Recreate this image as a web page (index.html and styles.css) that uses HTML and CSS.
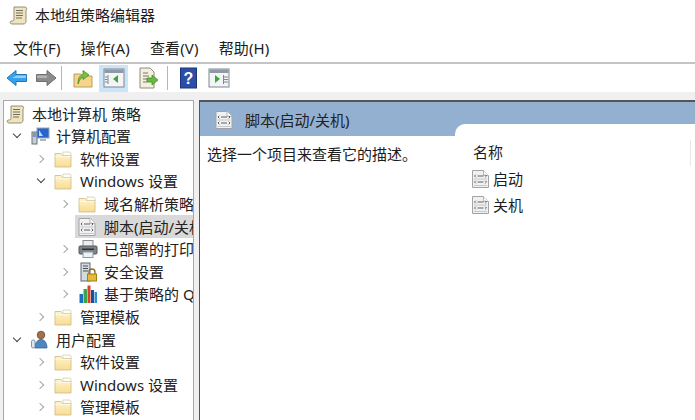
FILE: index.html
```html
<!DOCTYPE html>
<html lang="zh-CN">
<head>
<meta charset="utf-8">
<title>本地组策略编辑器</title>
<link rel="stylesheet" href="styles.css">
</head>
<body>
<svg class="defs" width="0" height="0" aria-hidden="true">
  <defs>
    <linearGradient id="fold" x1="0" y1="0" x2="0" y2="1"><stop offset="0" stop-color="#fff4cc"/><stop offset="1" stop-color="#f8dc92"/></linearGradient>
    <symbol id="folder" viewBox="0 0 18 18">
      <path d="M1 3.500h6l1.500 1.500H17v12H1z" fill="url(#fold)" stroke="#cdb985" stroke-width=".8"/>
      <path d="M9 2h7l1 1.200v2.300H8.600z" fill="#fffdf6" stroke="#cfc5a8" stroke-width=".7"/>
      <path d="M1.400 6.500h15.200" stroke="#fff8dc" stroke-width="1"/>
    </symbol>
    <symbol id="script" viewBox="0 0 17 18">
      <path d="M.5.500h11l5 5v12H.5z" fill="#f1f1f1" stroke="#a3a3a3"/>
      <path d="M11.500.500v5h5" fill="#fff" stroke="#b5b5b5"/>
      <path d="M3.800 4.700 2.500 6l1.300 1.300M13.200 4.700 14.500 6l-1.300 1.300M5.500 6h6M3.800 10.700 2.500 12l1.300 1.300M13.200 10.700l1.300 1.300-1.300 1.300M5.500 12h6" fill="none" stroke="#4b535b" stroke-width=".9"/>
      <path d="M2 9h13M2 15.500h13" stroke="#bdbdbd" stroke-width=".8"/>
    </symbol>
    <symbol id="scroll" viewBox="0 0 20 20">
      <path d="M5 2h11c2 0 2 2.500 1 3v11c0 2-1 3-3 3H3c-2 0-2.500-2.500-1-3 1.500 0 2.500 0 3-1z" fill="#efe4c0" stroke="#8d8468" stroke-width=".9"/>
      <path d="M7 5.500h7M7 8h7M7 10.500h7M7 13h6" stroke="#77705c" stroke-width="1"/>
    </symbol>
  </defs>
</svg>

<header class="titlebar">
  <svg class="ic20"><use href="#scroll"/></svg>
  <span class="title">本地组策略编辑器</span>
</header>

<nav class="menubar">
  <span class="menu">文件(F)</span>
  <span class="menu">操作(A)</span>
  <span class="menu">查看(V)</span>
  <span class="menu">帮助(H)</span>
</nav>

<div class="toolbar">
  <svg class="tool" viewBox="0 0 22 22"><path d="M1 11 10 3.500V7.500h10.500v7H10v4z" fill="#35a1ea" stroke="#2377b8"/><path d="M10.500 8.500h9.500v2.500H6z" fill="#8fd2f8"/></svg>
  <svg class="tool" viewBox="0 0 22 22"><path d="M21 11 12 3.500V7.500H1.500v7H12v4z" fill="#8b8b8b" stroke="#6e6e6e"/><path d="M2 8.500h10v2.500H2z" fill="#b4b4b4"/></svg>
  <i class="sep sep-a"></i>
  <svg class="tool" viewBox="0 0 22 22"><path d="M2 7h7l1.500 2H20v11H2z" fill="#f5d58a" stroke="#b99e5f"/><path d="M6 17c0-5 1-8 5-9.500V3.500L17 8l-6 4.500V10c-2 .8-3.500 3-5 7z" fill="#7cc142" stroke="#4b8c25" stroke-width=".8"/></svg>
  <span class="toolbtn">
    <svg class="tool flush" viewBox="0 0 22 22"><rect x="1" y="2" width="20" height="18" fill="#f2f4f6" stroke="#7d8790"/><rect x="1.500" y="2.500" width="19" height="3.500" fill="#8f99a3"/><path d="M5 8v9M2 10h2.500M2 12.500h2.500M2 15h2.500" stroke="#7d8790"/><path d="M15 8v8l-5-4z" fill="#3fa535"/></svg>
  </span>
  <svg class="tool doc" viewBox="0 0 22 22"><path d="M3 1h10l4 4v16H3z" fill="#f4f0e0" stroke="#8f8a7a"/><path d="M6 6h5M6 9h6M6 12h4M6 15h4" stroke="#7b776a"/><path d="M10 11h5V8l6 5-6 5v-3h-5z" fill="#63bd3c" stroke="#3f8e25" stroke-width=".8"/></svg>
  <i class="sep sep-b"></i>
  <svg class="tool" viewBox="0 0 22 22"><rect x="2.500" y="1" width="16" height="20" fill="#2b4fa8" stroke="#1c3477"/><text x="10.500" y="17" class="qmark">?</text></svg>
  <svg class="tool last" viewBox="0 0 22 22"><rect x="1" y="2" width="20" height="18" fill="#f2f4f6" stroke="#7d8790"/><rect x="1.500" y="2.500" width="19" height="3.500" fill="#8f99a3"/><path d="M15.500 8v9M16 10h4M16 12.500h4M16 15h4" stroke="#7d8790"/><path d="M7 8v8l5-4z" fill="#3fa535"/></svg>
</div>

<main class="workspace">
  <aside class="tree">
    <div class="row l0"><span class="chev"></span><svg class="ic20"><use href="#scroll"/></svg><span>本地计算机 策略</span></div>
    <div class="row l1"><span class="chev open"></span>
      <svg class="ic20" viewBox="0 0 20 20"><rect x="7" y="2" width="12" height="10" fill="#2a63c9" stroke="#9aa7b5"/><path d="M9 4l4 6h-4z" fill="#bcd9f7"/><path d="M10 13h6v2h-6z" fill="#aeb6bd"/><rect x="2" y="6" width="5" height="12" fill="#c5ccd3" stroke="#667480"/><path d="M3 8h3M3 10h3" stroke="#2a63c9"/></svg>
      <span>计算机配置</span></div>
    <div class="row l2"><span class="chev"></span><svg class="ic18"><use href="#folder"/></svg><span>软件设置</span></div>
    <div class="row l2"><span class="chev open"></span><svg class="ic18"><use href="#folder"/></svg><span>Windows 设置</span></div>
    <div class="row l3"><span class="chev"></span><svg class="ic18"><use href="#folder"/></svg><span>域名解析策略</span></div>
    <div class="row l3 selected"><span class="chev none"></span><svg class="ic18"><use href="#script"/></svg><span>脚本(启动/关机)</span></div>
    <div class="row l3"><span class="chev"></span>
      <svg class="ic20" viewBox="0 0 20 20"><rect x="5" y="1.500" width="10" height="6" fill="#eee" stroke="#8b8f93"/><rect x="1" y="7" width="18" height="8" rx="1" fill="#7d8387" stroke="#55595d"/><rect x="4" y="9.500" width="12" height="1.500" fill="#2f3235"/><rect x="5" y="13" width="10" height="5.500" fill="#eaf1f8" stroke="#8b9aa8"/></svg>
      <span>已部署的打印机</span></div>
    <div class="row l3"><span class="chev"></span>
      <svg class="ic20" viewBox="0 0 20 20"><rect x="3" y="1" width="9" height="18" fill="#d5dade" stroke="#5f6b75"/><path d="M5 4h5M5 6.500h5M5 9h5" stroke="#46525c"/><path d="M11 12v-2a3 3 0 0 1 6 0v2" fill="none" stroke="#8a6d1f" stroke-width="1.300"/><rect x="9.500" y="12" width="9" height="7" fill="#e5b93a" stroke="#a27f17"/></svg>
      <span>安全设置</span></div>
    <div class="row l3"><span class="chev"></span>
      <svg class="ic20" viewBox="0 0 20 20"><rect x="1.500" y="10" width="3.500" height="9" fill="#1f6fc0"/><rect x="5.500" y="5" width="3.500" height="14" fill="#37a845"/><rect x="9.500" y="1.500" width="3" height="17.500" fill="#d9402f"/><rect x="13" y="6" width="3" height="13" fill="#1c4f94"/><rect x="16.500" y="8" width="2.500" height="11" fill="#2a8fd0"/></svg>
      <span>基于策略的 QoS</span></div>
    <div class="row l2"><span class="chev"></span><svg class="ic18"><use href="#folder"/></svg><span>管理模板</span></div>
    <div class="row l1"><span class="chev open"></span>
      <svg class="ic20" viewBox="0 0 20 20"><circle cx="11" cy="5" r="3.800" fill="#a5714a" stroke="#5c3c26" stroke-width=".7"/><path d="M5 18c0-6 3-8.500 6-8.500s6 2.500 6 8.500z" fill="#4f86c2" stroke="#2e5d92" stroke-width=".7"/><rect x="1.500" y="10" width="3.500" height="8" rx="1.500" fill="#dfe7ee" stroke="#5b7f9f" stroke-width=".8"/></svg>
      <span>用户配置</span></div>
    <div class="row l2"><span class="chev"></span><svg class="ic18"><use href="#folder"/></svg><span>软件设置</span></div>
    <div class="row l2"><span class="chev"></span><svg class="ic18"><use href="#folder"/></svg><span>Windows 设置</span></div>
    <div class="row l2"><span class="chev"></span><svg class="ic18"><use href="#folder"/></svg><span>管理模板</span></div>
  </aside>

  <section class="detail">
    <div class="banner">
      <svg class="ic18"><use href="#script"/></svg>
      <span>脚本(启动/关机)</span>
    </div>
    <div class="panes">
      <p class="desc">选择一个项目来查看它的描述。</p>
      <div class="list">
        <div class="colhead">名称</div>
        <div class="item"><svg class="ic17"><use href="#script"/></svg><span>启动</span></div>
        <div class="item"><svg class="ic17"><use href="#script"/></svg><span>关机</span></div>
      </div>
    </div>
  </section>
</main>
</body>
</html>
```

FILE: styles.css
```css
* { box-sizing: border-box; }
html, body { margin: 0; height: 100%; }
body {
  width: 695px;
  height: 420px;
  overflow: hidden;
  background: #fff;
  color: #1c1c1c;
  font: 15px/22px "Noto Sans", "Noto Sans CJK SC", sans-serif;
  display: flex;
  flex-direction: column;
}
.defs { position: absolute; }
svg { flex: none; display: block; }
.ic20 { width: 20px; height: 20px; }
.ic18 { width: 18px; height: 18px; }
.ic17 { width: 17px; height: 18px; }

.titlebar { height: 29px; display: flex; align-items: center; padding-left: 9px; gap: 6px; }
.menubar { height: 35px; display: flex; align-items: center; padding: 5px 0 1px 13px; gap: 20px; letter-spacing: .15px; border-bottom: 2px solid #c4c4c4; }
.toolbar { height: 28px; display: flex; align-items: center; padding-left: 6px; background: #fff; }
.tool { width: 22px; height: 22px; margin-right: 7px; }
.tool.flush { margin: 0; }
.tool.doc { margin-left: 5px; margin-right: 6px; }
.tool.last { margin-right: 0; margin-left: 1px; }
.toolbtn { width: 29px; height: 27px; margin-left: -2px; margin-right: 4px; background: #cce4f7; display: flex; align-items: center; justify-content: center; }
.sep { width: 1px; height: 24px; background: #b5b5b5; margin-right: 10px; }
.sep-a { margin-left: -3px; }
.sep-b { margin-left: 2px; }
.qmark { font: bold 16px "Liberation Sans", sans-serif; fill: #fff; text-anchor: middle; }

.workspace { flex: 1; min-height: 0; display: flex; background: #f0f0f0; padding: 8px 0 0 3px; gap: 5px; }
.tree { width: 191px; background: #fff; border: 1px solid #a8a8a8; border-bottom: 0; overflow: hidden; padding-top: 1.400px; }
.row { height: 22.600px; display: flex; align-items: center; white-space: nowrap; color: #222; }
.row .ic20 { margin-right: 6px; }
.row .ic18 { margin-right: 8px; }
.l0 { padding-left: 2px; }
.l0 .chev { display: none; }
.l1 { padding-left: 8px; }
.l2 { padding-left: 32px; }
.l3 { padding-left: 56px; }
.selected { background: #d9d9d9; margin-left: 71px; padding-left: 3px; }
.selected .chev { display: none; }
.chev { width: 16px; flex: none; height: 10px; margin-right: 2px; position: relative; }
.chev::before {
  content: "";
  position: absolute;
  left: 1px;
  top: 2px;
  width: 5px;
  height: 5px;
  border-right: 1.500px solid #a6a6a6;
  border-top: 1.500px solid #a6a6a6;
  transform: rotate(45deg);
}
.chev.open::before {
  left: 2px;
  top: 0;
  border-color: #404040;
  transform: rotate(135deg);
}

.detail { flex: 1; min-width: 0; display: flex; flex-direction: column; background: #fff; border-left: 1px solid #555; border-top: 2px solid #555; }
.banner { height: 34px; padding: 1px 0 0 15px; background: #94b0d0; display: flex; align-items: center; gap: 12px; color: #222; }
.panes { flex: 1; display: flex; }
.desc { width: 255px; margin: 7px 0 0; padding-left: 7px; }
.list { flex: 1; margin-top: -12px; padding: 16px 0 0 18px; background: #fff; border-top-left-radius: 10px; height: 120px; }
.colhead { height: 26px; line-height: 24px; border-right: 1px solid #e8e8e8; margin-right: 4px; }
.item { height: 26px; margin-left: -1px; display: flex; align-items: center; gap: 4px; }
```
